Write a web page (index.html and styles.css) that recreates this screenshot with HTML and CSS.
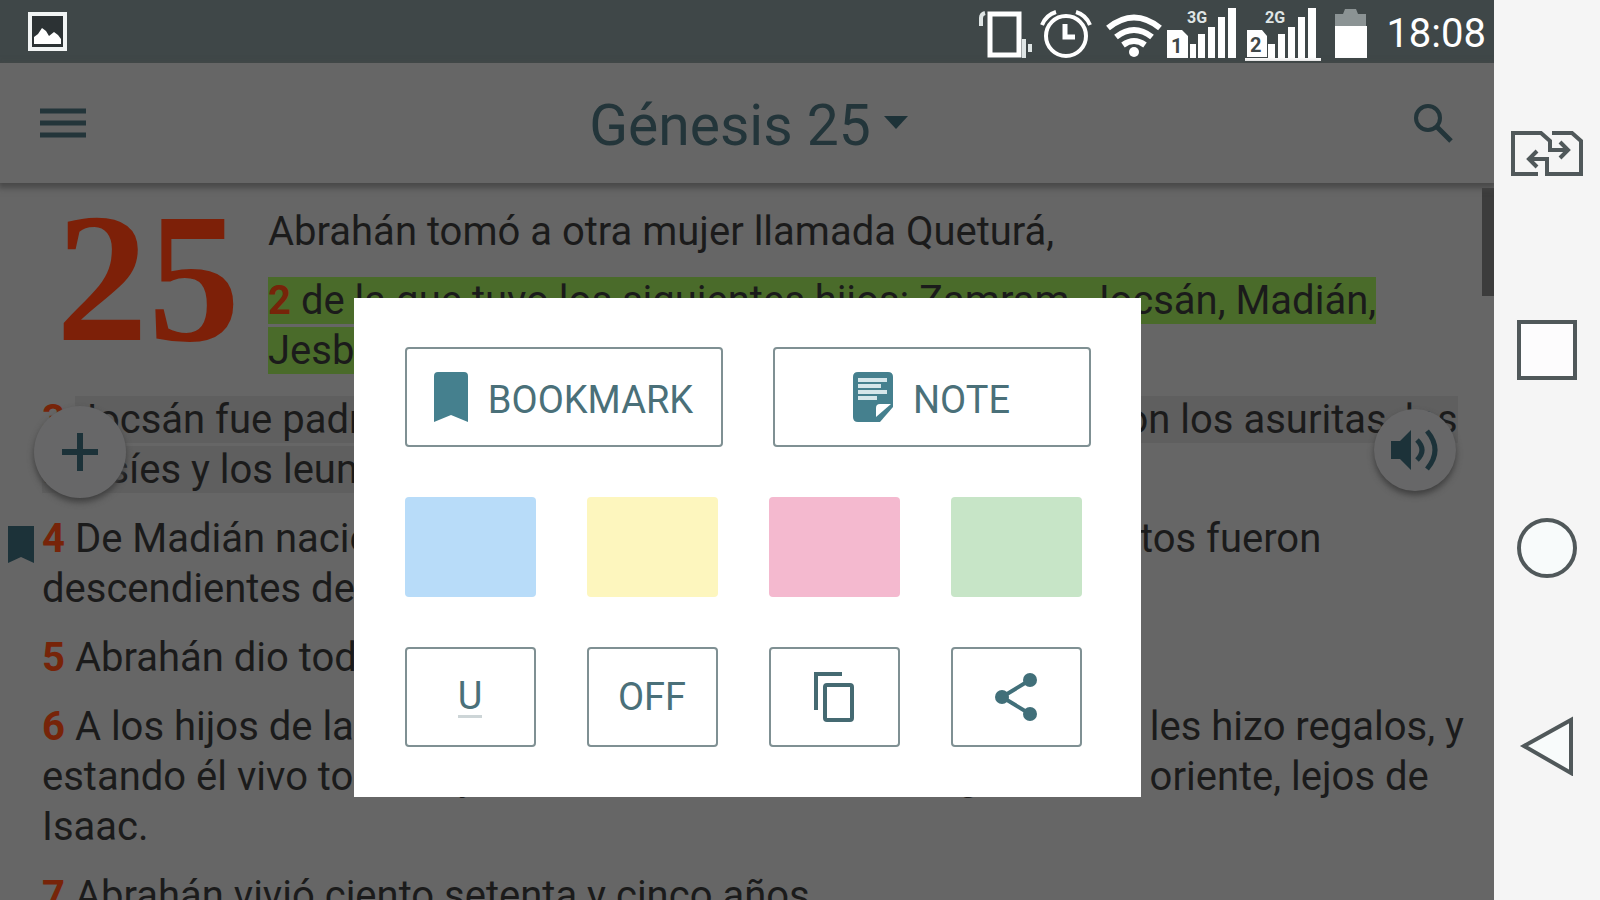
FILE: index.html
```html
<!DOCTYPE html>
<html lang="es">
<head>
<meta charset="utf-8">
<meta name="viewport" content="width=device-width, initial-scale=1">
<title>Génesis 25</title>
<link rel="stylesheet" href="styles.css">
</head>
<body>
<div class="device">
  <div class="screen">
    <div class="status">
      <svg class="status-photo" viewBox="0 0 39 39" aria-hidden="true"><path fill="#2c3234" stroke="#f1f4f4" stroke-width="4" d="M2 2h35v35H2z"/><path fill="#fff" d="M6 32V25l4-3 4-6 4 3 3 5 5-4 4 3 3 4v5z"/></svg>
      <div class="status-icons">
        <svg width="58" height="62" viewBox="976 0 58 62" aria-hidden="true"><path fill="none" stroke="#fff" stroke-width="5" d="M990 13h29v41h-29z"/><path fill="none" stroke="#dfe5e5" stroke-width="4" d="M985 12q-4 1-4 5v8M1024 38v19M1030 43v8"/></svg>
        <svg width="66" height="62" viewBox="1034 0 66 62" aria-hidden="true"><g fill="none" stroke="#fff" stroke-width="4"><circle cx="1066" cy="35" r="20"/><path stroke-width="5" d="M1065 23v13h10"/><path d="M1042 24q4-10 14-13M1090 24q-4-10-14-13"/></g></svg>
        <svg width="64" height="62" viewBox="1100 0 64 62" aria-hidden="true"><g fill="none" stroke="#fff" stroke-width="6"><path d="M1108 27q26-21 52 0"/><path d="M1116 36q18-14 36 0"/><path d="M1123 44q11-8 22 0"/></g><circle cx="1134" cy="51" r="5" fill="#fff"/></svg>
        <svg width="78" height="62" viewBox="1164 0 78 62" aria-hidden="true"><path fill="#fff" d="M1167 29h15l6 6v22h-21zM1190 43h6v14h-6zM1198 33h7v24h-7zM1208 26h7v31h-7zM1218 16h7v41h-7zM1228 7h8v50h-8z"/><text x="1171" y="52" class="sim-no">1</text><text x="1187" y="22" class="net">3G</text></svg>
        <svg width="82" height="62" viewBox="1242 0 82 62" aria-hidden="true"><path fill="#fff" d="M1247 29h15l5 6v21h-20zM1268 43h7v14h-7zM1278 33h7v24h-7zM1288 26h7v31h-7zM1298 16h7v41h-7zM1308 7h8v50h-8zM1245 57h76v3h-76z"/><text x="1250" y="51" class="sim-no">2</text><text x="1265" y="22" class="net">2G</text></svg>
        <svg width="54" height="62" viewBox="1324 0 54 62" aria-hidden="true"><path fill="#8b9394" d="M1335 13h8l2-5h11l2 5h8v12h-31z"/><path fill="#fff" d="M1335 25h32v32h-32z"/></svg>
        <span class="clock">18:08</span>
      </div>
    </div>
    <header class="appbar">
      <button class="icon-btn" aria-label="Menú"><svg width="46" height="32" viewBox="0 0 46 32"><path stroke="#23353a" stroke-width="5" d="M0 4h46M0 16h46M0 28h46"/></svg></button>
      <button class="title"><span>Génesis 25</span><svg width="26" height="14" viewBox="0 0 26 14"><path fill="#1d3238" d="M1 0h24L13 13z"/></svg></button>
      <button class="icon-btn" aria-label="Buscar"><svg width="42" height="42" viewBox="0 0 42 42"><g fill="none" stroke="#23353a" stroke-width="4"><circle cx="16" cy="16" r="12"/><path stroke-width="5" d="M25 25l14 14"/></g></svg></button>
    </header>
    <main class="reader">
      <div class="opening">
        <div class="chapter">25</div>
        <div class="verses">
          <p>Abrahán tomó a otra mujer llamada Queturá,</p>
          <p><mark class="green"><b>2</b> de la que tuvo los siguientes hijos: Zamram, Jocsán, Madián,<br>Jesbac y Súaj.</mark></p>
        </div>
      </div>
      <div class="verses">
        <p><b>3</b> <mark class="selected">Jocsán fue padre de Shebá y Dedán cuyos descendientes son los asuritas, los<br>latusíes y los leumitas.</mark></p>
        <p class="marked"><svg class="flag" width="26" height="37" viewBox="0 0 26 37" aria-hidden="true"><path fill="#1c3239" d="M0 0h26v37l-13-6-13 6z"/></svg><b>4</b> De Madián nacieron Ofá, Éfer, Hanoc, Abidá y Eldá. Todos estos fueron<br>descendientes de Queturá.</p>
        <p><b>5</b> Abrahán dio todo lo que tenía a Isaac.</p>
        <p><b>6</b> A los hijos de las concubinas que había tenido Abrahán solo les hizo regalos, y<br>estando él vivo todavía y los envió a residir en las regiones del oriente, lejos de<br>Isaac.</p>
        <p><b>7</b> Abrahán vivió ciento setenta y cinco años</p>
      </div>
      <div class="scrollbar"></div>
      <button class="fab fab-add" aria-label="Añadir"><svg width="36" height="40" viewBox="0 0 36 40"><path stroke="#1c3239" stroke-width="6" d="M18 1v38M0 20h36"/></svg></button>
      <button class="fab fab-audio" aria-label="Escuchar"><svg width="48" height="42" viewBox="0 0 48 42"><path fill="#1c3239" d="M0 12h9L20 1v40L9 30H0z"/><g fill="none" stroke="#1c3239" stroke-width="5"><path d="M26 11q10 10 0 20"/><path d="M36 2q16 19 0 38"/></g></svg></button>
    </main>
    <div class="overlay">
      <div class="dialog" role="dialog" aria-label="Opciones">
        <div class="row-two">
          <button class="opt"><svg width="34" height="50" viewBox="0 0 34 50"><path fill="#45808e" d="M4 0h26q4 0 4 4v46l-17-7-17 7V4q0-4 4-4z"/></svg><span class="caption">BOOKMARK</span></button>
          <button class="opt"><svg width="40" height="50" viewBox="0 0 40 50"><path fill="#45808e" d="M5 0h30q5 0 5 5v30L27 50H5q-5 0-5-5V5q0-5 5-5z"/><path fill="#fff" d="M23 45V36q0-4 4-4h11z"/><path stroke="#d5e6ea" stroke-width="4" d="M5 8h29M5 14h23M5 20h29M5 26h19"/></svg><span class="caption">NOTE</span></button>
        </div>
        <div class="row-four">
          <button class="swatch blue" aria-label="Azul"></button>
          <button class="swatch yellow" aria-label="Amarillo"></button>
          <button class="swatch pink" aria-label="Rosa"></button>
          <button class="swatch lime" aria-label="Verde"></button>
          <button class="opt"><span class="under">U</span></button>
          <button class="opt">OFF</button>
          <button class="opt" aria-label="Copiar"><svg width="42" height="50" viewBox="0 0 42 50"><g fill="none" stroke="#456a72" stroke-width="4"><path d="M3 38V2h26"/><rect x="12" y="13" width="27" height="35" rx="2"/></g></svg></button>
          <button class="opt" aria-label="Compartir"><svg width="44" height="50" viewBox="0 0 44 50"><path fill="none" stroke="#416f79" stroke-width="4" d="M36 8L8 25l28 17"/><g fill="#416f79"><circle cx="36" cy="8" r="7"/><circle cx="8" cy="25" r="7"/><circle cx="36" cy="42" r="7"/></g></svg></button>
        </div>
      </div>
    </div>
  </div>
  <nav class="navbar">
    <button aria-label="Cambiar SIM"><svg width="72" height="60" viewBox="0 0 72 60"><g fill="none" stroke="#50585a" stroke-width="4"><path d="M27 52H2V11h28l9 8v9h18M49 20l8 8-8 8"/><path d="M41 11h20l9 8v33H36V37H18M26 29l-8 8 8 8"/></g></svg></button>
    <button aria-label="Recientes"><svg width="60" height="60" viewBox="0 0 60 60"><path fill="#fdfcfd" stroke="#50585a" stroke-width="4" d="M2 2h56v56H2z"/></svg></button>
    <button aria-label="Inicio"><svg width="60" height="60" viewBox="0 0 60 60"><circle cx="30" cy="30" r="28" fill="#f8fbfb" stroke="#50585a" stroke-width="4"/></svg></button>
    <button aria-label="Atrás"><svg width="60" height="60" viewBox="0 0 60 60"><path fill="#f8fbfb" stroke="#50585a" stroke-width="4" d="M7 30L54 4v53z"/></svg></button>
  </nav>
</div>
</body>
</html>
```
FILE: styles.css
```css
* { box-sizing: border-box; }

body {
  margin: 0;
  font-family: Roboto, "Liberation Sans", sans-serif;
  background: #666;
}

button {
  padding: 0;
  border: 0;
  background: none;
  font: inherit;
  color: inherit;
}

svg { display: block; flex: none; }

.device {
  display: flex;
  height: 100vh;
  overflow: hidden;
}

.screen {
  position: relative;
  flex: 1;
  display: flex;
  flex-direction: column;
  min-width: 0;
  overflow: hidden;
  background: #666;
}

.status {
  display: flex;
  flex: none;
  align-items: center;
  justify-content: space-between;
  height: 63px;
  padding: 0 8px 0 28px;
  background: #3f4748;
}

.status-photo { width: 39px; height: 39px; }

.status-icons { display: flex; align-items: center; }

.sim-no { font-size: 20px; font-weight: 700; fill: #3f4748; }

.net { font-size: 16px; font-weight: 700; fill: #dfe5e5; }

.clock {
  margin-left: 8px;
  padding-top: 4px;
  font-size: 40px;
  line-height: 58px;
  color: #fff;
}

.appbar {
  display: flex;
  flex: none;
  align-items: center;
  justify-content: space-between;
  height: 120px;
  padding: 0 40px;
  box-shadow: 0 3px 6px 2px #484848;
  z-index: 1;
}

.title {
  display: flex;
  align-items: center;
  gap: 12px;
  font-size: 57px;
  line-height: 64px;
  color: #23353a;
}

.title span { padding-top: 6px; }

.reader {
  position: relative;
  flex: 1;
  min-height: 0;
  padding: 24px 24px 0 42px;
  font-size: 40px;
  line-height: 50px;
  color: #1b1b1b;
  white-space: nowrap;
}

.opening { display: flex; }

.chapter {
  width: 226px;
  padding: 9px 0 0 14px;
  font-family: "Liberation Serif", serif;
  font-size: 184px;
  font-weight: 700;
  line-height: 124px;
  color: #7d2008;
}

.verses p { margin: 0 0 19px; }

.verses b { font-weight: 700; color: #772409; }

mark { color: inherit; }

.green { background: #4a6b2a; }

.selected { background: #5f5f5f; }

.marked { position: relative; }

.flag { position: absolute; left: -34px; top: 12px; }

.scrollbar {
  position: absolute;
  top: 5px;
  right: 0;
  width: 12px;
  height: 108px;
  background: #3c3c3c;
}

.fab {
  position: absolute;
  display: flex;
  align-items: center;
  justify-content: center;
  border-radius: 50%;
  background: #676768;
  box-shadow: 0 4px 6px #3f3f3f;
}

.fab-add { left: 34px; top: 223px; width: 92px; height: 92px; }

.fab-audio { right: 38px; top: 226px; width: 82px; height: 82px; }

.overlay {
  position: absolute;
  inset: 0;
  z-index: 2;
  display: flex;
  align-items: center;
  justify-content: center;
  padding-top: 195px;
}

.dialog {
  display: grid;
  gap: 50px;
  padding: 49px 50px 50px 51px;
  background: #fff;
}

.row-two {
  display: grid;
  grid-template-columns: repeat(2, 318px);
  gap: 50px;
}

.row-four {
  display: grid;
  grid-template-columns: repeat(4, 131px);
  gap: 50px 51px;
}

.opt,
.swatch { height: 100px; border-radius: 4px; }

.opt {
  display: flex;
  align-items: center;
  justify-content: center;
  gap: 20px;
  border: 2px solid #7f9093;
  font-size: 38px;
  color: #4a7079;
}

.caption { padding-top: 6px; }

.under { border-bottom: 3px solid #cdd5d7; line-height: 38px; }

.blue { background: #b8dcf9; }
.yellow { background: #fdf6be; }
.pink { background: #f4b9cf; }
.lime { background: #c7e5c7; }

.navbar {
  display: flex;
  flex: none;
  flex-direction: column;
  align-items: center;
  gap: 138px;
  width: 106px;
  padding-top: 122px;
  background: #f5f5f5;
}
```
